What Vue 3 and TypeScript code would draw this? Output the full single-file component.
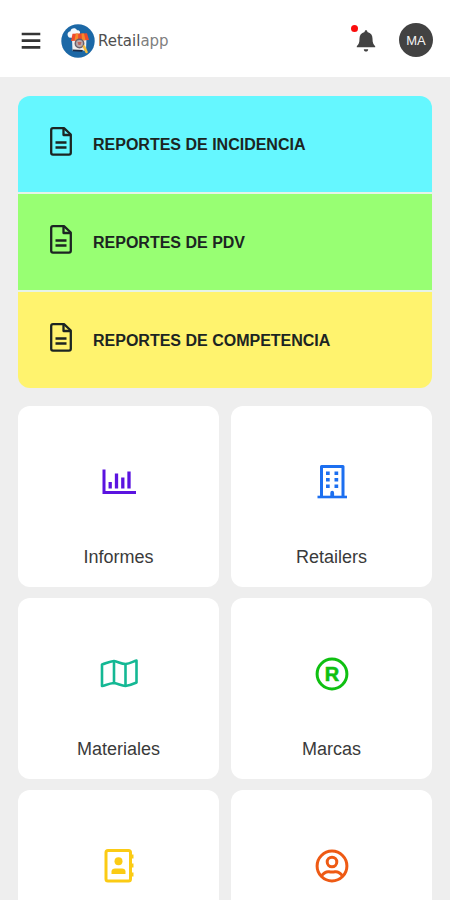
<script setup lang="ts">
type IconName = 'chart' | 'building' | 'map' | 'registered' | 'contacts' | 'account'

interface Report {
  label: string
  tone: string
}

interface Tile {
  icon: IconName
  label?: string
}

const reports: Report[] = [
  { label: 'REPORTES DE INCIDENCIA', tone: 'cyan' },
  { label: 'REPORTES DE PDV', tone: 'green' },
  { label: 'REPORTES DE COMPETENCIA', tone: 'yellow' },
]

const tiles: Tile[] = [
  { icon: 'chart', label: 'Informes' },
  { icon: 'building', label: 'Retailers' },
  { icon: 'map', label: 'Materiales' },
  { icon: 'registered', label: 'Marcas' },
  { icon: 'contacts' },
  { icon: 'account' },
]
</script>

<template>
  <div class="app">
    <header class="bar">
      <button class="plain" type="button">
        <svg class="menu" viewBox="0 0 20 20" aria-hidden="true">
          <path d="M0.7 3H19.3M0.7 9.700H19.3M0.7 16.400H19.3" stroke="#343434" stroke-width="2.7" />
        </svg>
      </button>
      <a class="brand" href="#">
        <svg class="logo" viewBox="0 0 34 34" aria-hidden="true">
          <circle cx="17" cy="17" r="16.7" fill="#1c68a6" />
          <path d="M8 13.5C5.5 11 6.5 7.7 9.5 7.3C9.5 4.2 14.5 3 16 6.2C18.5 6 20 8 18.5 10L12 14Z" fill="#f4f8fb" />
          <path d="M11 14.5L25.5 13.5L25 26.5L11.5 27Z" fill="#f2efed" />
          <path d="M11.5 25.5L22 26L21 27.8L11.7 27.2Z" fill="#1b2c48" />
          <path d="M11.5 9.7L26 9.3L28 16L10 17Z" fill="#ee4b2b" />
          <path d="M14.8 9.6H17.3L17 16.5H13.5ZM20.5 9.5H23L24.5 16.2H21Z" fill="#f58a2c" />
          <circle cx="18.5" cy="19.5" r="4.2" fill="#b9a9ab" stroke="#66606d" stroke-width="1.5" />
          <path d="M16.5 18H20.5L19.5 21H17.5Z" fill="#bd625a" />
          <path d="M23 22.5L25.5 28" stroke="#f4bd3d" stroke-width="2.6" stroke-linecap="round" />
        </svg>
        <span class="wordmark">Retail<span class="light">app</span></span>
      </a>
      <button class="plain bell" type="button">
        <svg class="bell-icon" viewBox="0 0 20 24" aria-hidden="true">
          <path d="M10 1.2C10.9 1.2 11.4 1.9 11.4 2.9C14.8 3.6 16.5 6.3 16.5 9.5C16.5 13.5 17.3 15.5 19.2 17.2V18.3H0.8V17.2C2.7 15.5 3.5 13.5 3.5 9.5C3.5 6.3 5.2 3.6 8.6 2.9C8.6 1.9 9.1 1.2 10 1.2Z" fill="#424242" />
          <path d="M7.8 20.2H12.2C12.2 21.7 11.3 22.6 10 22.6S7.8 21.7 7.8 20.2Z" fill="#424242" />
        </svg>
        <span class="dot"></span>
      </button>
      <button class="avatar" type="button">MA</button>
    </header>

    <main class="content">
      <nav class="reports">
        <a v-for="r in reports" :key="r.label" class="report" :class="r.tone" href="#">
          <svg class="doc" viewBox="0 0 22 29" fill="none" stroke="currentColor" stroke-width="2.3" stroke-linejoin="round" aria-hidden="true">
            <path d="M3 1.2H14L20.8 7.5V25.8C20.8 27 20.2 27.7 19 27.7H3C1.8 27.7 1.2 27 1.2 25.8V3C1.2 1.8 1.8 1.2 3 1.2Z" />
            <path d="M13.5 1.5V8H20.5M5.5 15.5H16.5M5.5 20.5H16.5" />
          </svg>
          <span>{{ r.label }}</span>
        </a>
      </nav>

      <nav class="tiles">
        <a v-for="t in tiles" :key="t.icon" class="tile" href="#">
          <svg class="tile-icon" :class="t.icon" viewBox="0 0 40 40" fill="none" stroke="currentColor" stroke-width="3" aria-hidden="true">
            <template v-if="t.icon === 'chart'">
              <path d="M5 7.5V30.5H37" />
              <path d="M11.2 20V26.5M17.5 11.5V26.5M23.8 15.5V26.5M30 9.5V26.5" stroke-width="3.3" />
            </template>
            <template v-else-if="t.icon === 'building'">
              <path d="M9.5 34.5V4.5H31V34.5" stroke-linejoin="round" />
              <path d="M5.5 35H35" stroke-width="2.6" />
              <path d="M14 9.5H17.700V13H14ZM22.500 9.5H26.200V13H22.500ZM14 16H17.700V19.5H14ZM22.500 16H26.200V19.5H22.500ZM14 22.5H17.700V26H14ZM22.500 22.5H26.200V26H22.500Z" fill="currentColor" stroke="none" />
              <path d="M18.3 34.5V31Q18.3 28.8 20.2 28.8T22.1 31V34.5Z" fill="currentColor" stroke="none" />
            </template>
            <template v-else-if="t.icon === 'map'">
              <path d="M3 10.5C7 9.5 10 7.5 15 7C19 7.5 22 10 26.5 10C31 9.5 34 7.5 37.5 6.5V28.5C34 30 31 31.5 26.5 32C22 31.5 19 29.5 15 29C10 29.5 7 31 3 32Z" stroke-width="2.6" stroke-linejoin="round" />
              <path d="M15 7V29M26.5 10V32" stroke-width="2.6" />
            </template>
            <template v-else-if="t.icon === 'registered'">
              <circle cx="20" cy="20" r="14.9" />
              <text x="20" y="27" text-anchor="middle" fill="currentColor" stroke="currentColor" stroke-width="0.6">R</text>
            </template>
            <template v-else-if="t.icon === 'contacts'">
              <rect x="7" y="4.5" width="24.5" height="30.5" rx="2" />
              <path d="M32.5 8.500V12.500M32.5 17.500V21.500M32.5 26.500V30.500" stroke-width="4" />
              <circle cx="19.5" cy="15.3" r="4" fill="currentColor" stroke="none" />
              <path d="M12.5 28V25.5C12.5 23.5 14 22.5 16 22.5H23C25 22.5 26.5 23.5 26.5 25.5V28Z" fill="currentColor" stroke="none" />
            </template>
            <template v-else>
              <circle cx="20" cy="20" r="14.9" />
              <circle cx="20" cy="16" r="4.8" />
              <path d="M9.5 30C12 26.5 14.500 25.500 17 25.800C19 26.200 21 26.200 23 25.800C25.500 25.500 28 26.5 30.5 30" />
            </template>
          </svg>
          <span v-if="t.label" class="tile-label">{{ t.label }}</span>
        </a>
      </nav>
    </main>
  </div>
</template>

<style>
body {
  background: #eeeeee;
}
</style>

<style scoped>
.app {
  display: flex;
  flex-direction: column;
  height: 100vh;
  background: #eeeeee;
  color: #3a3a3a;
  font-family: "Liberation Sans", Arial, sans-serif;
}

.app * {
  box-sizing: border-box;
}

a {
  color: inherit;
  text-decoration: none;
}

svg {
  display: block;
  flex: none;
}

.bar {
  display: flex;
  flex: none;
  align-items: center;
  padding: 23px 17px 18px 21px;
  background: #ffffff;
}

.plain {
  padding: 0;
  border: 0;
  background: none;
}

.menu {
  width: 20px;
  height: 20px;
}

.brand {
  display: flex;
  align-items: center;
  gap: 3px;
  margin-left: 20px;
}

.logo {
  width: 34px;
  height: 34px;
}

.wordmark {
  color: #505050;
  font-family: "DejaVu Sans", sans-serif;
  font-size: 15px;
}

.light {
  color: #808080;
}

.bell {
  position: relative;
  margin-left: auto;
}

.bell-icon {
  width: 20px;
  height: 24px;
}

.dot {
  position: absolute;
  top: -4px;
  left: -5px;
  width: 7px;
  height: 7px;
  border-radius: 50%;
  background: #fb0d0d;
}

.avatar {
  width: 34px;
  height: 34px;
  margin-bottom: 2px;
  margin-left: 23px;
  padding: 0;
  border: 0;
  border-radius: 50%;
  background: #424242;
  color: #f4f4f4;
  font-family: inherit;
  font-size: 13px;
}

.content {
  flex: 1;
  min-height: 0;
  padding: 19px 18px;
  overflow-y: auto;
  scrollbar-width: none;
}

.reports {
  display: grid;
  gap: 2px;
  overflow: hidden;
  border-radius: 12px;
  background: #e6f3e8;
}

.report {
  display: flex;
  align-items: center;
  gap: 21px;
  height: 96px;
  padding: 2px 32px 0;
  color: #1c2522;
  font-size: 16px;
  font-weight: 700;
}

.cyan {
  background: #65f7ff;
}

.green {
  background: #98ff73;
}

.yellow {
  background: #fff36e;
}

.doc {
  width: 22px;
  height: 29px;
  margin-bottom: 8px;
}

.tiles {
  display: grid;
  grid-template-columns: 1fr 1fr;
  gap: 11px 12px;
  margin-top: 18px;
}

.tile {
  display: flex;
  flex-direction: column;
  align-items: center;
  gap: 43px;
  height: 181px;
  padding-top: 56px;
  border-radius: 12px;
  background: #ffffff;
}

.tile-icon {
  width: 40px;
  height: 40px;
}

.tile-icon text {
  font-size: 20px;
  font-weight: 700;
}

.tile-label {
  font-size: 18px;
  line-height: 24px;
}

.chart {
  color: #5b13e0;
}

.building {
  color: #1c6ff0;
}

.map {
  color: #14b894;
}

.registered {
  color: #0fc011;
}

.contacts {
  color: #fbcb14;
}

.account {
  color: #ee5a14;
}
</style>
